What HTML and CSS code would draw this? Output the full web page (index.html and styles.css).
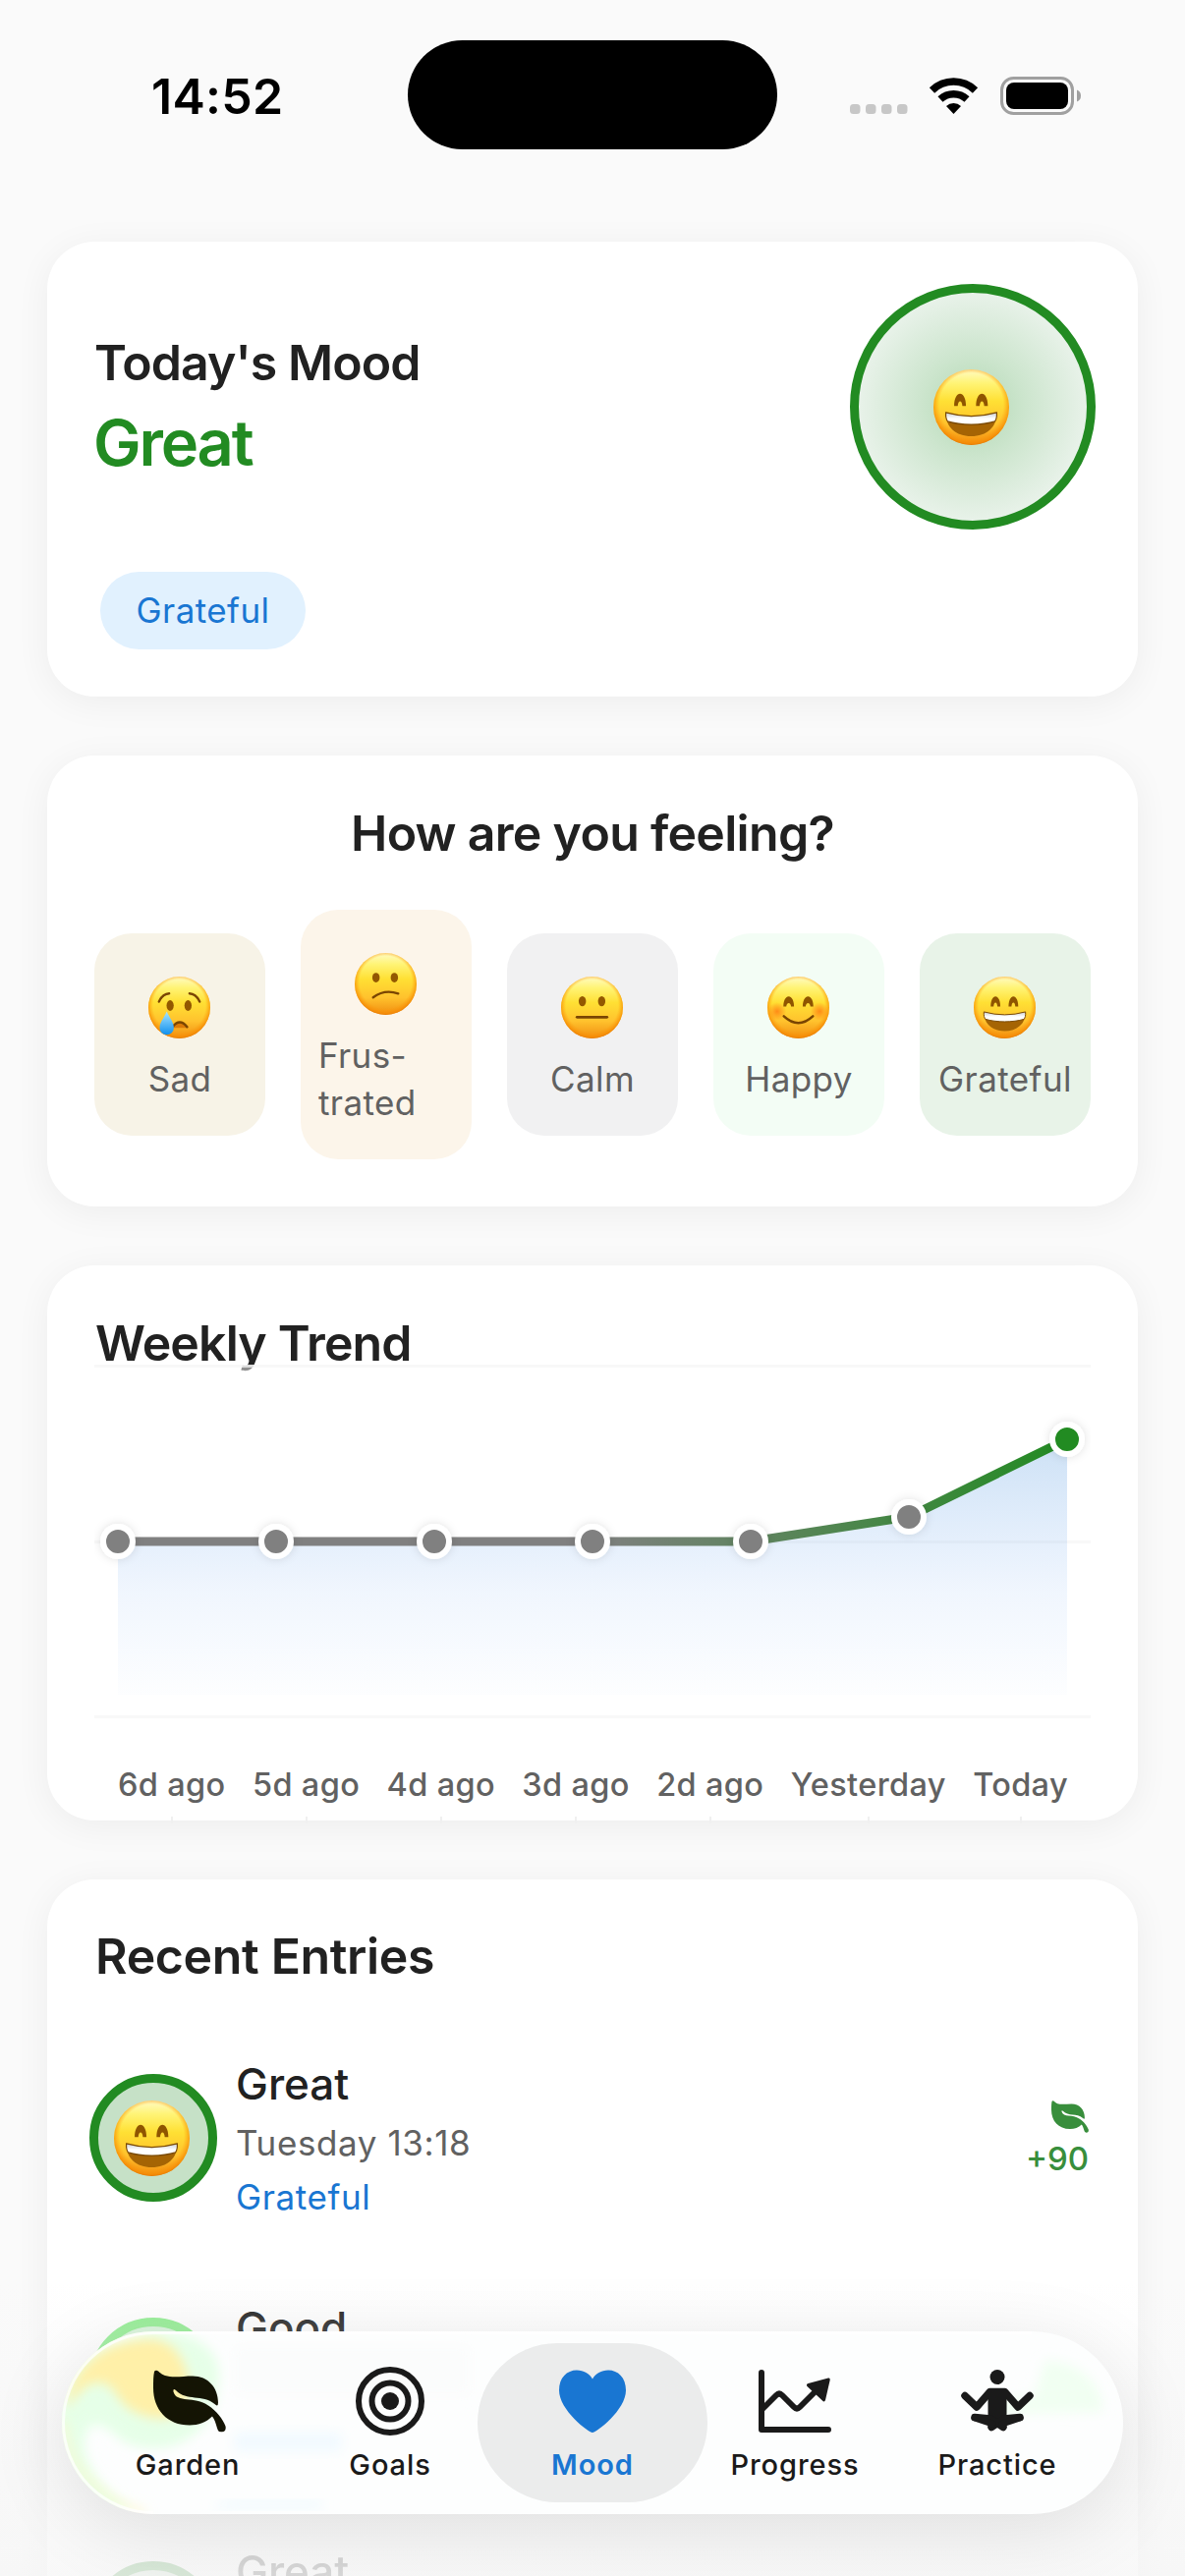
FILE: index.html
```html
<!DOCTYPE html>
<html lang="en">
<head>
<meta charset="utf-8">
<title>Mood</title>
<link rel="stylesheet" href="styles.css">
</head>
<body>
<svg class="defs" width="0" height="0" aria-hidden="true">
  <defs>
    <linearGradient id="face" x1="0" y1="0" x2="0" y2="1">
      <stop offset="0" stop-color="#fffbc4"/><stop offset=".18" stop-color="#fff476"/><stop offset=".42" stop-color="#ffe034"/><stop offset=".72" stop-color="#ffc22d"/><stop offset="1" stop-color="#f08c10"/>
    </linearGradient>
    <radialGradient id="rim" cx=".5" cy=".47" r=".54">
      <stop offset=".78" stop-color="#ff9d0a" stop-opacity="0"/><stop offset=".94" stop-color="#f58a05" stop-opacity=".8"/><stop offset="1" stop-color="#d96f05" stop-opacity=".9"/>
    </radialGradient>
    <linearGradient id="teeth" x1="0" y1="0" x2="0" y2="1"><stop offset="0" stop-color="#c9ccd2"/><stop offset=".5" stop-color="#fff"/></linearGradient>
    <radialGradient id="blush"><stop offset="0" stop-color="#ff7a10" stop-opacity=".8"/><stop offset="1" stop-color="#ff7a10" stop-opacity="0"/></radialGradient>
    <linearGradient id="tear" x1="0" y1="0" x2="0" y2="1"><stop offset="0" stop-color="#a8e6ff"/><stop offset="1" stop-color="#0f8fee"/></linearGradient>
    <symbol id="head" viewBox="0 0 64 64"><circle cx="32" cy="32" r="32" fill="url(#face)"/><circle cx="32" cy="32" r="32" fill="url(#rim)"/></symbol>
    <symbol id="grin" viewBox="0 0 64 64">
      <use href="#head"/>
      <path d="M17.500 31c0-14 10-14 10 0M36 31c0-14 10-14 10 0" fill="#8f5500"/>
      <path d="M20.500 31.500c.2-6 3.800-6 4 0M39 31.500c.2-6 3.800-6 4 0" fill="#ffdc35"/>
      <path d="M10.500 36.500q21.500 6 43 0C54 48.500 45 56.500 32 56.500S10 48.500 10.500 36.500Z" fill="#a56404"/>
      <path d="M10.500 36.500q21.500 6 43 0c.3 4-.4 6-1.500 7.500-11 3.500-29 3.500-40 0-1.100-1.500-1.800-3.500-1.500-7.500Z" fill="url(#teeth)" stroke="#7a4a04" stroke-width="1"/>
    </symbol>
    <symbol id="smile" viewBox="0 0 64 64">
      <use href="#head"/>
      <circle cx="10" cy="36" r="9.500" fill="url(#blush)"/><circle cx="54" cy="36" r="9.500" fill="url(#blush)"/>
      <path d="M16.500 31c0-14 11-14 11 0M36.500 31c0-14 11-14 11 0" fill="#8f5500"/>
      <path d="M19.500 31.500c.2-5.500 4.800-5.500 5 0M39.500 31.500c.2-5.500 4.800-5.500 5 0" fill="#ffdc35"/>
      <path d="M17 41q15 14 30 0" fill="none" stroke="#7a4502" stroke-width="2.600" stroke-linecap="round"/>
    </symbol>
    <symbol id="neutral" viewBox="0 0 64 64">
      <use href="#head"/>
      <ellipse cx="22" cy="25.500" rx="3.800" ry="5.200" fill="#935800"/><ellipse cx="42" cy="25.500" rx="3.800" ry="5.200" fill="#935800"/>
      <path d="M16.500 42h31" stroke="#7a4502" stroke-width="2.800" stroke-linecap="round"/>
    </symbol>
    <symbol id="confused" viewBox="0 0 64 64">
      <use href="#head"/>
      <ellipse cx="22" cy="25.500" rx="3.800" ry="5" fill="#935800"/><ellipse cx="41" cy="25.500" rx="3.800" ry="5" fill="#935800"/>
      <path d="M19 46q12-9 26-4" fill="none" stroke="#7a4502" stroke-width="2.400" stroke-linecap="round"/>
    </symbol>
    <symbol id="crying" viewBox="0 0 64 64">
      <use href="#head"/>
      <path d="M11 26q3.500-8 10.500-8.500M53 26q-3.500-8-10.500-8.500" fill="none" stroke="#7a4502" stroke-width="2.400" stroke-linecap="round"/>
      <ellipse cx="22.500" cy="30" rx="3.700" ry="5.500" fill="#935800"/><ellipse cx="41" cy="30" rx="3.700" ry="5.500" fill="#935800"/>
      <path d="M25 53q7-11.500 15.500 0" fill="#d97908"/><path d="M25 52q7.500-9.500 15 0" fill="none" stroke="#7a4502" stroke-width="2.600" stroke-linecap="round"/>
      <path d="M19 36c3.500 8 7.300 11 7.300 17a7.300 7.300 0 0 1-14.600 0c0-6 3.800-9 7.300-17Z" fill="url(#tear)"/>
    </symbol>
    <symbol id="leaf" viewBox="0 0 74 63">
      <path d="M3 0C5 0 7 4 12 5.500C20 8 30 6 40 6C56 6 66 18 66 33Q66 38 62.500 34.500C50 24 34 32 23 20.500Q20 18 20.500 22C24 34 42 26 56 36C64 41 71 50 73.500 57C74.500 61 72 63 69.500 63C67 63 66 62 65 59C63.500 54 62.500 50 60 47C54 53 46 56 37 56C14 56 0 40 0 18C0 11 0 6 1 1.500Q1.500 0 3 0Z" fill="currentColor"/>
    </symbol>
  </defs>
</svg>

<div class="screen">
  <header class="status">
    <div class="clock">14:52</div>
    <div class="island"></div>
    <svg class="signals" viewBox="860 70 244 56" aria-hidden="true">
      <g fill="#c7c7c7"><rect x="865" y="106" width="10.500" height="10" rx="3.500"/><rect x="881" y="106" width="10.500" height="10" rx="3.500"/><rect x="897" y="106" width="10.500" height="10" rx="3.500"/><rect x="913" y="106" width="10.500" height="10" rx="3.500"/></g>
      <path d="M948.500 92a31.500 31.500 0 0 1 44 0" fill="none" stroke="#000" stroke-width="7.500"/>
      <path d="M957 101a20 20 0 0 1 27 0" fill="none" stroke="#000" stroke-width="7.500"/>
      <path d="M970.500 116l-7.500-8a11 11 0 0 1 15 0Z"/>
      <rect x="1019.500" y="79.500" width="72" height="36" rx="12" fill="none" stroke="#a0a0a0" stroke-width="3"/>
      <rect x="1024" y="84" width="63" height="27" rx="8"/>
      <path d="M1096 91.500q4 1.500 4 6t-4 6Z" fill="#a0a0a0"/>
    </svg>
  </header>

  <main class="content">
    <section class="card today">
      <div class="today-row">
        <div>
          <h2 class="title t-today">Today's Mood</h2>
          <p class="mood">Great</p>
        </div>
        <div class="ring ring-lg"><svg class="emoji-lg"><use href="#grin"/></svg></div>
      </div>
      <span class="chip">Grateful</span>
    </section>

    <section class="card feeling">
      <h2 class="title t-how">How are you feeling?</h2>
      <div class="options">
        <button class="option sad"><svg class="emoji"><use href="#crying"/></svg><span>Sad</span></button>
        <button class="option frustrated"><svg class="emoji"><use href="#confused"/></svg><span>Frus-<br>trated</span></button>
        <button class="option calm"><svg class="emoji"><use href="#neutral"/></svg><span>Calm</span></button>
        <button class="option happy"><svg class="emoji"><use href="#smile"/></svg><span>Happy</span></button>
        <button class="option grateful"><svg class="emoji"><use href="#grin"/></svg><span>Grateful</span></button>
      </div>
    </section>

    <section class="card trend">
      <h2 class="title t-weekly">Weekly Trend</h2>
      <svg class="chart" viewBox="96 1386 1014 370" aria-hidden="true">
        <defs>
          <linearGradient id="area" x1="0" y1="0" x2="0" y2="1"><stop offset="0" stop-color="#1976d2" stop-opacity=".22"/><stop offset=".6" stop-color="#2f80ed" stop-opacity=".07"/><stop offset="1" stop-color="#2f80ed" stop-opacity=".01"/></linearGradient>
          <linearGradient id="line" gradientUnits="userSpaceOnUse" x1="603" y1="0" x2="1086" y2="0"><stop offset="0" stop-color="#808080"/><stop offset="1" stop-color="#228b22"/></linearGradient>
          <filter id="soft" filterUnits="userSpaceOnUse" x="90" y="1400" width="1030" height="220"><feDropShadow dx="0" dy="0" stdDeviation="5" flood-opacity=".12"/></filter>
        </defs>
        <path d="M96 1389H1110V1396H96Z" fill="#fff" fill-opacity=".5"/>
        <path d="M96 1390.500H1110M96 1569.500H1110M96 1747.500H1110" stroke="#f5f5f5" stroke-opacity=".75" stroke-width="3"/>
        <path d="M120 1569H764L925 1544L1086 1465V1725H120Z" fill="url(#area)"/>
        <path d="M120 1569H764L925 1544L1086 1465" fill="none" stroke="url(#line)" stroke-width="9"/>
        <g fill="#808080" stroke="#fff" stroke-width="6" filter="url(#soft)">
          <circle cx="120" cy="1569" r="15"/><circle cx="281" cy="1569" r="15"/><circle cx="442" cy="1569" r="15"/><circle cx="603" cy="1569" r="15"/><circle cx="764" cy="1569" r="15"/><circle cx="925" cy="1544" r="15"/><circle cx="1086" cy="1465" r="15" fill="#228b22"/>
        </g>
      </svg>
      <div class="days"><span>6d ago</span><span>5d ago</span><span>4d ago</span><span>3d ago</span><span>2d ago</span><span>Yesterday</span><span>Today</span></div>
    </section>

    <section class="card recent">
      <h2 class="title t-recent">Recent Entries</h2>
      <article class="entry">
        <div class="ring ring-sm"><svg class="emoji-lg"><use href="#grin"/></svg></div>
        <div class="entry-text"><h3>Great</h3><p class="when">Tuesday 13:18</p><p class="tag">Grateful</p></div>
        <div class="points"><svg class="leaf-sm"><use href="#leaf"/></svg><span>+90</span></div>
      </article>
      <article class="entry good">
        <div class="ring ring-sm"></div>
        <div class="entry-text"><h3>Good</h3></div>
      </article>
      <article class="entry last">
        <div class="ring ring-sm"></div>
        <div class="entry-text"><h3>Great</h3></div>
      </article>
    </section>
  </main>

  <div class="fade"></div>
  <nav class="tabs">
    <svg class="glass" viewBox="0 0 1080 186" aria-hidden="true">
      <defs><filter id="blur" x="-30%" y="-30%" width="160%" height="160%"><feGaussianBlur stdDeviation="6"/></filter></defs>
      <path d="M90 0C140 0 168 20 158 60C154 108 105 132 62 112C48 100 36 88 26 100C16 125 32 155 72 182L20 186L-10 90L10 30Z" fill="#e6ffe8" filter="url(#blur)"/>
      <path d="M4 78C8 35 45 8 90 8C118 8 134 40 127 72C122 94 88 92 68 78C54 68 54 52 36 52C20 54 12 70 4 78Z" fill="#fff0a8" filter="url(#blur)"/>
      <path d="M2 90C4 135 36 172 85 184" fill="none" stroke="#fff6c4" stroke-width="4" filter="url(#blur)"/>
      <path d="M93 1.500H987M93 1.500A91.500 91.500 0 0 0 93 184.500" fill="none" stroke="#fff" stroke-width="3" stroke-opacity=".75"/>
      <path d="M1000 30C1035 28 1060 55 1060 82L950 84L945 70L990 66Z" fill="#f1fff2" filter="url(#blur)"/>
      <path d="M175 102H285V123H175Z" fill="#f2faff" filter="url(#blur)"/>
      <path d="M170 173H265V180H150Z" fill="#eef9ff" filter="url(#blur)"/>
      <path d="M175 15H415V65H175Z" fill="#fbfcfc" filter="url(#blur)"/>
    </svg>
    <a class="tab garden"><svg class="icon" viewBox="0 0 74 70"><use href="#leaf" y="3.500" width="74" height="63"/></svg><span>Garden</span></a>
    <a class="tab"><svg class="icon" viewBox="0 0 74 70" fill="none" stroke="currentColor" stroke-width="6"><circle cx="37" cy="35" r="32"/><circle cx="37" cy="35" r="18.500"/><circle cx="37" cy="35" r="9" fill="currentColor" stroke="none"/></svg><span>Goals</span></a>
    <a class="tab active"><svg class="icon" viewBox="0 0 74 70"><path d="M37 67C33 67 3 44 3 24C3 11 11 3.500 21 3.500C28 3.500 34 7 37 12.500C40 7 46 3.500 53 3.500C63 3.500 71 11 71 24C71 44 41 67 37 67Z" fill="currentColor"/></svg><span>Mood</span></a>
    <a class="tab"><svg class="icon" viewBox="0 0 74 70"><path d="M3 6V64H71M4 43L18 29Q21 26 24 29L36 41Q39 44 42 41L60 23" fill="none" stroke="currentColor" stroke-width="6" stroke-linecap="round" stroke-linejoin="round"/><path d="M50.500 17L71 11.500Q73 11 72.700 13.500L68 34Q67 36.500 65 34.500L49.500 20Q48 18 50.500 17Z" fill="currentColor"/></svg><span>Progress</span></a>
    <a class="tab"><svg class="icon" viewBox="0 0 74 70" fill="none" stroke="currentColor" stroke-linecap="round" stroke-linejoin="round"><circle cx="37" cy="10.500" r="7.500" fill="currentColor" stroke="none"/><path d="M4 29.500L16 41L29.500 25.500H44.500L58 41L70 29.500" stroke-width="7.500"/><path d="M27.500 24H46.500V60H27.500Z" fill="currentColor" stroke="none"/><path d="M14 51.500L30 53L43 61.500M60 51.500L44 53L31 61.500" stroke-width="7.500"/><path d="M14 52L32 58M60 52L42 58" stroke-width="7"/></svg><span>Practice</span></a>
  </nav>
</div>
</body>
</html>
```
FILE: styles.css
```css
* { box-sizing: border-box; margin: 0; padding: 0; }
body { background: #fafafa; }
.defs { position: absolute; }
.screen {
  position: relative;
  width: 1206px;
  height: 2622px;
  overflow: hidden;
  background: #fafafa;
  color: #212121;
  font-family: Inter, "Liberation Sans", sans-serif;
}
svg { display: block; flex: none; }

.status { display: flex; height: 246px; padding: 41px 102px 0 154px; align-items: flex-start; }
.clock { width: 261px; padding-top: 25px; font-size: 50px; line-height: 64px; font-weight: 600; letter-spacing: .3px; color: #000; }
.island { width: 376px; height: 111px; border-radius: 56px; background: #000; }
.signals { width: 244px; height: 56px; margin: 29px 0 0 69px; }

.content { display: flex; flex-direction: column; gap: 60px; padding: 0 48px; }
.card { flex: none; padding: 0 48px; border-radius: 48px; background: #fff; box-shadow: 0 6px 36px rgba(0, 0, 0, .055); }
.title { width: max-content; font-size: 50px; line-height: 60px; font-weight: 600; white-space: nowrap; }

.today { height: 463px; padding: 43px 43px 0 48px; }
.today-row { display: flex; height: 250px; justify-content: space-between; }
.t-today { margin-top: 50px; letter-spacing: -.9px; }
.mood { width: max-content; margin: 13px 0 0 -1px; font-size: 65px; line-height: 78px; font-weight: 600; letter-spacing: -2.2px; color: #228b22; }
.ring { display: flex; flex: none; align-items: center; justify-content: center; border: 9px solid #228b22; border-radius: 50%; }
.ring-lg { width: 250px; height: 250px; background: radial-gradient(circle closest-side, #b2d8b3, #cce5cd 45%, #e8f2e9); }
.emoji-lg { width: 77px; height: 77px; margin-right: 4px; }
.chip { display: flex; width: 209px; height: 79px; margin: 43px 0 0 6px; padding-bottom: 1px; align-items: center; justify-content: center; border-radius: 40px; background: #e1f1fe; color: #1976d2; font-size: 35px; letter-spacing: .4px; }

.feeling { height: 459px; padding-top: 48px; }
.t-how { margin: 1px auto 0; letter-spacing: -.7px; }
.options { display: grid; grid-template-columns: repeat(5, 174px); height: 254px; margin-top: 48px; justify-content: space-between; align-items: center; }
.option { display: flex; flex-direction: column; align-items: center; padding: 44px 0 34px; border: 0; border-radius: 38px; color: #616161; font: 35px/48px Inter, sans-serif; letter-spacing: .4px; }
.option span { margin-top: 17px; text-align: left; }
.emoji { width: 63px; height: 63px; margin-right: 2px; }
.sad { background: #f7f3e7; }
.frustrated { background: #fcf5ea; }
.frustrated span { width: 138px; }
.calm { background: #f1f1f2; }
.happy { background: #f3fdf5; }
.grateful { background: #e8f3e8; }

.trend { height: 565px; padding-top: 49px; }
.t-weekly { margin-left: 1px; letter-spacing: -.85px; }
.chart { width: 1014px; height: 370px; margin-top: -11px; position: relative; }
.days { display: flex; justify-content: space-between; height: 100px; margin-top: 40px; padding: 0 23px 0 24px; color: #616161; font-size: 32.500px; line-height: 42px; font-weight: 500; letter-spacing: .35px; }
.days span { height: 60px; background: linear-gradient(#f0f0f0, #f0f0f0) center bottom / 2px 7px no-repeat; white-space: nowrap; }

.recent { height: 820px; padding-top: 48px; }
.t-recent { margin-left: 1px; letter-spacing: -.35px; }
.entry { display: flex; height: 248px; margin-left: -5px; align-items: flex-start; }
.entry:first-of-type { margin-top: 90px; }
.ring-sm { width: 130px; height: 130px; background: #c6e1c7; }
.entry-text { margin: -17px 0 0 19px; font-size: 35px; letter-spacing: .6px; }
.entry-text h3 { font-size: 44px; line-height: 54px; font-weight: 500; letter-spacing: 0; }
.when { margin-top: 6px; line-height: 54px; color: #616161; }
.tag { line-height: 56px; color: #1976d2; }
.points { display: flex; flex-direction: column; align-items: flex-end; margin: 27px 2px 0 auto; color: #388e3c; font-size: 33px; line-height: 40px; font-weight: 500; }
.leaf-sm { width: 38px; height: 33px; margin-bottom: 6px; }
.good .ring { border-color: #90ee90; background: #d8f5da; }
.last { opacity: .55; }

.fade { position: absolute; left: 0; right: 0; bottom: 0; height: 300px; background: linear-gradient(rgba(250, 250, 250, 0), rgba(247, 247, 247, .35) 35%, rgba(246, 246, 246, .74)); }
.tabs { position: absolute; left: 63px; top: 2373px; display: flex; width: 1080px; height: 186px; padding: 12px 11px; border-radius: 93px; background: #fdfefe; box-shadow: 0 16px 80px rgba(0, 0, 0, .11); }
.glass { position: absolute; inset: 0; width: 1080px; height: 186px; border-radius: 93px; overflow: hidden; }
.tab { position: relative; display: flex; flex: none; width: 234px; height: 162px; margin-right: -28px; flex-direction: column; align-items: center; padding-top: 24px; border-radius: 81px; color: #1a1a1a; font-size: 29px; line-height: 36px; font-weight: 500; letter-spacing: .9px; }
.tab span { margin-top: 12px; white-space: nowrap; }
.icon { width: 74px; height: 70px; }
.garden .icon { color: #141404; margin-left: 3px; }
.active { background: #ebecec; color: #1976d2; font-weight: 600; }
```
